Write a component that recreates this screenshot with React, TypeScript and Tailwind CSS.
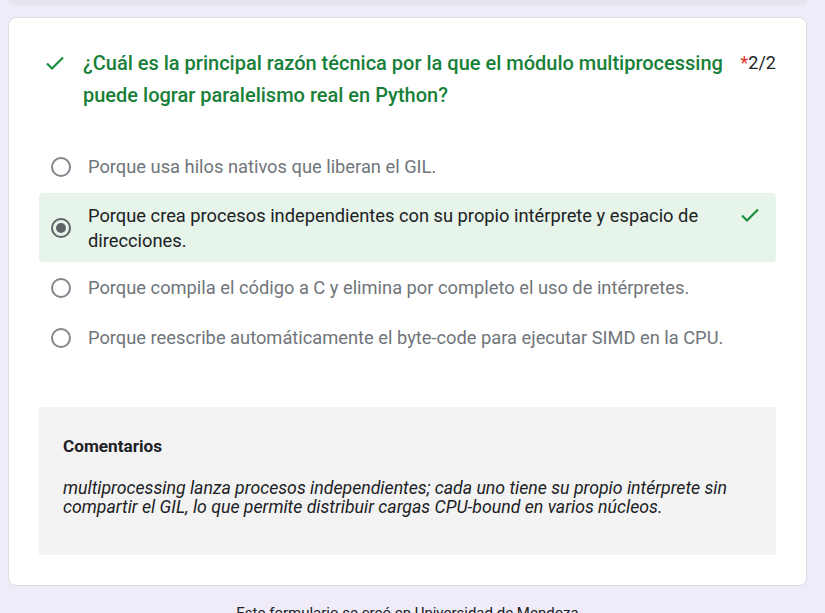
import React from "react";

function Check({ className }: { className?: string }) {
  return (
    <svg viewBox="0 0 24 24" className={className} fill="none">
      <path d="M4 12.5l5 5L20 6.5" stroke="#1e8e3e" strokeWidth="2.2" strokeLinecap="butt" />
    </svg>
  );
}

function Radio({ selected }: { selected?: boolean }) {
  return (
    <div
      className={
        selected
          ? "w-5 h-5 rounded-full border-2 border-[#5f6368] flex items-center justify-center shrink-0"
          : "w-5 h-5 rounded-full border-2 border-[#80868b] shrink-0"
      }
    >
      {selected && <div className="w-[10px] h-[10px] rounded-full bg-[#5f6368]" />}
    </div>
  );
}

const options = [
  "Porque usa hilos nativos que liberan el GIL.",
  "Porque crea procesos independientes con su propio intérprete y espacio de direcciones.",
  "Porque compila el código a C y elimina por completo el uso de intérpretes.",
  "Porque reescribe automáticamente el byte-code para ejecutar SIMD en la CPU.",
];

export default function App() {
  return (
    <div
      className="w-[825px] h-[613px] overflow-hidden bg-[#efebf8] pl-2 pr-[18px]"
      style={{ fontFamily: "Roboto, 'Noto Sans', sans-serif" }}
    >
      <div className="h-[5px] rounded-b-lg bg-[#e6e4ec]" />
      <div className="mt-[12px] bg-white rounded-lg border border-[#dadce0] px-[30px] pt-[29px] pb-[30px]">
        <div className="flex items-start">
          <Check className="w-6 h-6 ml-[4px] mt-[4px] shrink-0" />
          <div className="flex-1 ml-[16px] text-[20px] leading-[32px] font-medium text-[#188038]">
            ¿Cuál es la principal razón técnica por la que el módulo multiprocessing puede lograr paralelismo real en Python?
          </div>
          <div className="ml-[8px] text-[18px] leading-[32px] text-[#202124] whitespace-nowrap">
            <span className="text-[#d93025]">*</span>2/2
          </div>
        </div>

        <div className="mt-[32px] flex flex-col gap-[2px]">
          {options.map((o, i) =>
            i === 1 ? (
              <div key={i} className="h-[69px] rounded bg-[#e6f4ea] flex items-center pl-3 pr-[14px]">
                <Radio selected />
                <div className="flex-1 ml-[17px] text-[18.3px] leading-[25px] text-[#202124]">{o}</div>
                <Check className="w-6 h-6 self-start mt-[10px] ml-4 shrink-0" />
              </div>
            ) : (
              <div key={i} className="h-12 flex items-center pl-3">
                <Radio />
                <div className="ml-[17px] text-[18.3px] leading-6 text-[#70757a]">{o}</div>
              </div>
            )
          )}
        </div>

        <div className="mt-[45px] bg-[#f3f3f3] h-[148px] px-6 pt-[27px]">
          <div className="text-[17.2px] leading-6 font-bold text-[#202124]">Comentarios</div>
          <div className="mt-[21px] text-[17.7px] leading-[19px] italic text-[#202124]">
            multiprocessing lanza procesos independientes; cada uno tiene su propio intérprete sin compartir el GIL, lo que permite distribuir cargas CPU-bound en varios núcleos.
          </div>
        </div>
      </div>
      <div className="mt-[17px] text-center text-[15px] leading-5 text-[#202124]">
        Este formulario se creó en Universidad de Mendoza
      </div>
    </div>
  );
}
